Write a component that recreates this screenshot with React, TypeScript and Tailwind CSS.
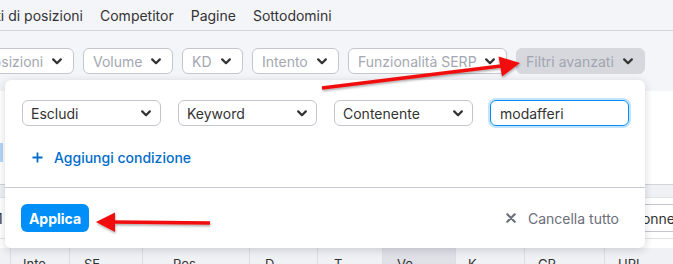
import React from 'react';

const font = { fontFamily: 'Inter, "Liberation Sans", sans-serif' };

function Chevron({ className = 'text-[#333]' }: { className?: string }) {
  return (
    <svg width="10" height="7" viewBox="0 0 10 7" className={className}>
      <path d="M1.2 1.4 L5 5.2 L8.8 1.4" fill="none" stroke="currentColor" strokeWidth="2.2" strokeLinecap="round" strokeLinejoin="round" />
    </svg>
  );
}

function FilterButton({ label, w, muted = false }: { label: string; w: string; muted?: boolean }) {
  return (
    <div
      className={`${w} h-[26px] shrink-0 flex items-center justify-between pl-[9px] pr-[11px] rounded-[6px] border text-[14px] ${
        muted ? 'bg-[#d6d8de] border-[#d6d8de] text-[#a2a5ae]' : 'bg-white border-[#c4c6ce] text-[#a4a7b0]'
      }`}
    >
      <span className="whitespace-nowrap">{label}</span>
      <Chevron />
    </div>
  );
}

function Select({ label }: { label: string }) {
  return (
    <div className="w-[139px] h-[26px] shrink-0 flex items-center justify-between pl-[8px] pr-[9px] rounded-[6px] border border-[#c4c6ce] bg-white text-[14px] text-[#333]">
      <span>{label}</span>
      <Chevron />
    </div>
  );
}

const columns = [
  { w: 'w-[10px]', label: '', minus: false, pr: '' },
  { w: 'w-[59px]', label: 'Inte', minus: false, pr: '', pl: 'pl-[12px]' },
  { w: 'w-[73px]', label: 'SE', minus: false, pr: '', pl: 'pl-[14px]' },
  { w: 'w-[107px]', label: 'Pos', minus: true, pr: 'pr-[34px]', pl: 'pl-[30px]' },
  { w: 'w-[68px]', label: 'D', minus: true, pr: 'pr-[14px]', pl: 'pl-[15px]' },
  { w: 'w-[65px]', label: 'T', minus: true, pr: 'pr-[16px]', pl: 'pl-[16px]' },
  { w: 'w-[73px]', label: 'Vo', minus: true, pr: 'pr-[15px]', pl: 'pl-[14px]', active: true },
  { w: 'w-[69px]', label: 'K', minus: true, pr: 'pr-[14px]', pl: 'pl-[12px]' },
  { w: 'w-[80px]', label: 'CP', minus: true, pr: 'pr-[14px]', pl: 'pl-[13px]' },
  { w: 'w-[69px]', label: 'URL', minus: false, pr: '', pl: 'pl-[13px]' },
];

export default function App() {
  return (
    <div className="relative w-[673px] h-[264px] overflow-hidden bg-[#f4f5f9]" style={font}>
      {/* top navigation */}
      <div className="h-[31px] flex items-center gap-[17px] border-b border-[#d3d5dc] text-[14px] text-[#333] whitespace-nowrap">
        <div className="w-[83px] shrink-0 flex justify-end overflow-hidden">
          <span>Cambiamenti di posizioni</span>
        </div>
        <span>Competitor</span>
        <span>Pagine</span>
        <span>Sottodomini</span>
      </div>

      {/* filter bar */}
      <div className="h-[60px] pt-[17px] flex gap-[9px]">
        <div className="w-[74px] shrink-0 flex justify-end overflow-hidden">
          <FilterButton label="Posizioni" w="w-[100px]" />
        </div>
        <FilterButton label="Volume" w="w-[90px]" />
        <FilterButton label="KD" w="w-[61px]" />
        <FilterButton label="Intento" w="w-[87px]" />
        <FilterButton label="Funzionalità SERP" w="w-[159px]" />
        <FilterButton label="Filtri avanzati" w="w-[129px]" muted />
      </div>

      {/* content behind the dropdown */}
      <div className="h-[93px] bg-white pt-[52px]">
        <div className="w-[3px] h-[19px] bg-[#b3d5f6]" />
      </div>
      <div className="h-[13px] border-t border-[#d3d5dc] bg-[#f0f1f5]" />
      <div className="h-[41px] bg-white border-t border-[#e1e3e8] flex items-center justify-between text-[14px] text-[#333]">
        <span className="-ml-[3px]">1</span>
        <div className="h-[28px] flex items-center px-[12px] border border-[#c4c6ce] rounded-[6px] -mr-[15px]">Colonne</div>
      </div>
      <div className="h-[10px] bg-white border-t border-[#e1e3e8]" />

      {/* table header */}
      <div className="flex h-[34px] bg-[#f0f1f5] text-[13px] text-[#333]">
        {columns.map((c, i) => (
          <div
            key={i}
            className={`${c.w} shrink-0 flex items-center justify-between ${c.pl ?? ''} ${c.pr} ${
              i > 0 ? 'border-l border-[#dcdee4]' : ''
            } ${c.active ? 'bg-[#dfe1e7]' : ''}`}
          >
            <span>{c.label}</span>
            {c.minus && <span className={`w-[12px] h-[3px] rounded-[1px] ${c.active ? 'bg-[#8d9098]' : 'bg-[#a9acb4]'}`} />}
          </div>
        ))}
      </div>

      {/* advanced filters dropdown */}
      <div className="absolute left-[5px] top-[80px] w-[640px] h-[168px] bg-white rounded-[6px] shadow-[0_2px_8px_rgba(30,35,50,0.18)] flex flex-col">
        <div className="px-[17px] pt-[20px]">
          <div className="flex gap-[17px]">
            <Select label="Escludi" />
            <Select label="Keyword" />
            <Select label="Contenente" />
            <div className="w-[139px] h-[26px] shrink-0 flex items-center pl-[9px] rounded-[6px] border border-[#008ff8] shadow-[0_0_0_2px_#c5e3fd] text-[14px] text-[#333]">
              modafferi
            </div>
          </div>
          <div className="mt-[21px] h-[20px] flex items-center gap-[11px] pl-[10px] text-[14px] font-medium text-[#006dca]">
            <svg width="11" height="11" viewBox="0 0 11 11">
              <path d="M5.5 0.5 V10.5 M0.5 5.5 H10.5" stroke="currentColor" strokeWidth="1.8" />
            </svg>
            <span>Aggiungi condizione</span>
          </div>
        </div>
        <div className="mt-[20px] border-t border-[#c9cbd2]" />
        <div className="flex items-center justify-between pt-[16px] pl-[16px] pr-[26px]">
          <div className="w-[68px] h-[28px] flex items-center justify-center rounded-[6px] bg-[#008ff8] text-white text-[14px] font-bold">
            Applica
          </div>
          <div className="flex items-center gap-[12px] text-[14px] text-[#6c6e79]">
            <svg width="10" height="10" viewBox="0 0 10 10">
              <path d="M1.3 1.3 L8.7 8.7 M8.7 1.3 L1.3 8.7" stroke="currentColor" strokeWidth="2.2" strokeLinecap="round" />
            </svg>
            <span>Cancella tutto</span>
          </div>
        </div>
      </div>

      {/* red annotation arrows */}
      <svg className="absolute inset-0 pointer-events-none" width="673" height="264" viewBox="0 0 673 264">
        <defs>
          <filter id="sh" x="-10%" y="-50%" width="120%" height="200%">
            <feDropShadow dx="0.5" dy="1.5" stdDeviation="1.2" floodColor="#000" floodOpacity="0.35" />
          </filter>
        </defs>
        <g filter="url(#sh)" fill="#f10d0d" stroke="#f10d0d">
          <path d="M322 88 L501 66" strokeWidth="3.4" fill="none" />
          <polygon points="498.5,56.5 520,63 502,76.5" stroke="none" />
          <path d="M210 223 L113 222" strokeWidth="3.4" fill="none" />
          <polygon points="115,212.5 96,222 115,232" stroke="none" />
        </g>
      </svg>
    </div>
  );
}
